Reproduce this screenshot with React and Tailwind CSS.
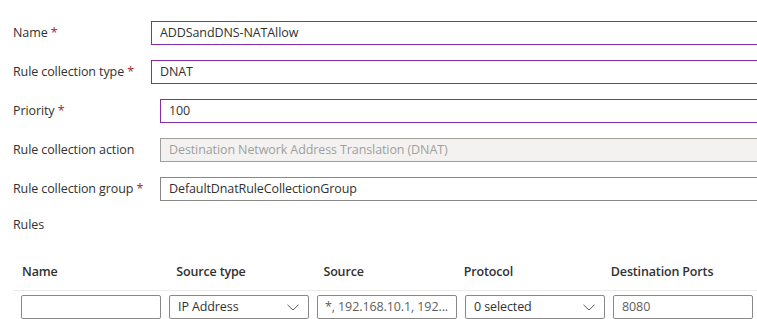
import React from "react";

const purple = "border-[#8a2da5]";
const txt = "text-[12.5px] tracking-[-0.1px]";

function Chevron() {
  return (
    <svg width="12" height="7" viewBox="0 0 12 7" className="shrink-0">
      <path d="M0.5 0.8 L6 6 L11.5 0.8" fill="none" stroke="#605e5c" strokeWidth="1" />
    </svg>
  );
}

function Row({ label, required, labelW, children }) {
  return (
    <div className="flex items-center h-6">
      <div className={`${labelW} shrink-0 ${txt} text-[#323130]`}>
        {label}
        {required && <span className="text-[#a4262c]"> *</span>}
      </div>
      {children}
    </div>
  );
}

export default function App() {
  return (
    <div
      className="w-[757px] h-[319px] overflow-hidden bg-white relative"
      style={{ fontFamily: '"Open Sans", "Noto Sans", sans-serif' }}
    >
      <div className="pl-[13px] pt-[21px] flex flex-col gap-[15px]">
        <Row label="Name" required labelW="w-[138px]">
          <div className={`flex-1 h-6 border border-r-0 ${purple} pl-[8px] flex items-center ${txt} text-[#323130]`}>
            ADDSandDNS-NATAllow
          </div>
        </Row>
        <Row label="Rule collection type" required labelW="w-[138px]">
          <div className={`flex-1 h-6 border border-r-0 ${purple} pl-[8px] flex items-center ${txt} text-[#323130]`}>
            DNAT
          </div>
        </Row>
        <Row label="Priority" required labelW="w-[147px]">
          <div className={`flex-1 h-6 border border-r-0 ${purple} pl-[8px] flex items-center ${txt} text-[#323130]`}>
            100
          </div>
        </Row>
        <Row label="Rule collection action" labelW="w-[147px]">
          <div className={`flex-1 h-6 border border-r-0 border-[#a19f9d] bg-[#f3f2f1] pl-[8px] flex items-center ${txt} text-[#a19f9d]`}>
            Destination Network Address Translation (DNAT)
          </div>
        </Row>
        <Row label="Rule collection group" required labelW="w-[147px]">
          <div className={`flex-1 h-6 border border-r-0 border-[#8a8886] pl-[8px] flex items-center ${txt} text-[#323130]`}>
            DefaultDnatRuleCollectionGroup
          </div>
        </Row>
      </div>

      <div className={`pl-[13px] mt-[15px] ${txt} text-[#323130] leading-[18px]`}>Rules</div>

      <div className="pl-[13px] mt-[29px]">
        <div className="flex text-[12.5px] tracking-[-0.15px] font-semibold text-[#323130] leading-[18px] pb-[9px] pl-[8px]">
          <div className="w-[148px] pl-[1px]">Name</div>
          <div className="w-[148px] pl-[8px]">Source type</div>
          <div className="w-[148px] pl-[8px]">Source</div>
          <div className="w-[148px] pl-[1px]">Protocol</div>
          <div className="w-[148px] pl-[1px]">Destination Ports</div>
        </div>
        <div className="h-px bg-[#edebe9]" />
        <div className="flex gap-2 pl-[8px] pt-[4px]">
          <div className="w-[140px] h-6 border border-[#8a8886] rounded-[2px]" />
          <div className={`w-[140px] h-6 border border-[#8a8886] rounded-[2px] flex items-center justify-between pl-[8px] pr-[9px] ${txt} text-[#323130]`}>
            <span>IP Address</span>
            <Chevron />
          </div>
          <div className={`w-[140px] h-6 border border-[#8a8886] rounded-[2px] flex items-center pl-[7px] ${txt} text-[#605e5c] whitespace-nowrap overflow-hidden`}>
            *, 192.168.10.1, 192...
          </div>
          <div className={`w-[140px] h-6 border border-[#8a8886] rounded-[2px] flex items-center justify-between pl-[8px] pr-[9px] ${txt} text-[#323130]`}>
            <span>0 selected</span>
            <Chevron />
          </div>
          <div className={`w-[140px] h-6 border border-[#8a8886] rounded-[2px] flex items-center pl-[8px] ${txt} text-[#605e5c]`}>
            8080
          </div>
        </div>
      </div>
    </div>
  );
}
